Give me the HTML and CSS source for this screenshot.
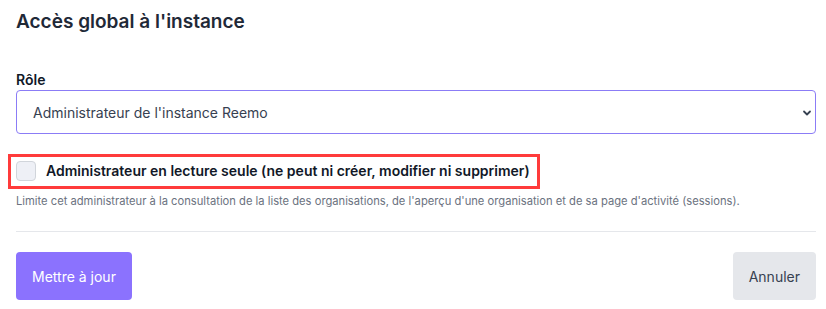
FILE: index.html
```html
<!DOCTYPE html>
<html>
<head>
  <link rel="stylesheet" href="styles.css">
</head>
<body>
  <div class="panel">
    <h1 class="title">Accès global à l'instance</h1>

    <label class="field-label" for="role">Rôle</label>
    <div class="select-wrap">
      <select id="role" class="select">
        <option>Administrateur de l'instance Reemo</option>
      </select>
      <svg class="chevron" width="12" height="12" viewBox="0 0 20 20" aria-hidden="true">
        <path d="M5 7.5l5 5 5-5" fill="none" stroke="#374151" stroke-width="3" stroke-linecap="round" stroke-linejoin="round"/>
      </svg>
    </div>

    <div class="highlight">
      <input type="checkbox" id="readonly" class="checkbox">
      <label for="readonly" class="check-label">Administrateur en lecture seule (ne peut ni créer, modifier ni supprimer)</label>
    </div>
    <p class="help">Limite cet administrateur à la consultation de la liste des organisations, de l'aperçu d'une organisation et de sa page d'activité (sessions).</p>

    <hr class="divider">

    <div class="actions">
      <button type="button" class="btn btn-primary">Mettre à jour</button>
      <button type="button" class="btn btn-secondary">Annuler</button>
    </div>
  </div>
</body>
</html>
```

FILE: styles.css
```css
body {
  margin: 0;
  background: #ffffff;
  font-family: Inter, "Noto Sans", sans-serif;
  color: #1f2937;
}
.panel {
  padding: 8px 10px 0 16px;
}
.title {
  margin: 0 0 34px;
  font-size: 19px;
  line-height: 28px;
  font-weight: 600;
  color: #1f2937;
}
.field-label {
  display: block;
  font-size: 14px;
  line-height: 20px;
  font-weight: 600;
  color: #111827;
}
.select-wrap {
  position: relative;
}
.select {
  display: block;
  width: 100%;
  height: 44px;
  padding: 0 40px 0 16px;
  border: 1px solid #8b7cf6;
  border-radius: 4px;
  background: #fff;
  font-family: inherit;
  font-size: 14px;
  color: #374151;
  appearance: none;
  -webkit-appearance: none;
}
.chevron {
  position: absolute;
  right: 3px;
  top: 17px;
}
.highlight {
  display: inline-flex;
  align-items: center;
  gap: 10px;
  margin: 20px 0 0 -8px;
  padding: 4px 7px 5px 5px;
  border: 3px solid #ff3b3b;
}
.checkbox {
  width: 20px;
  height: 20px;
  margin: 0;
  border: 1px solid #d1d5db;
  border-radius: 4px;
  background: #eef0f6;
  appearance: none;
  -webkit-appearance: none;
}
.check-label {
  font-size: 14px;
  line-height: 20px;
  font-weight: 600;
  color: #111827;
}
.help {
  margin: 4px 0 0;
  font-size: 11.2px;
  line-height: 16px;
  color: #6b7280;
}
.divider {
  margin: 22px 0 0;
  border: 0;
  border-top: 1px solid #e5e7eb;
}
.actions {
  display: flex;
  justify-content: space-between;
  margin-top: 20px;
}
.btn {
  height: 48px;
  padding: 0 16px;
  border: 0;
  border-radius: 4px;
  font-family: inherit;
  font-size: 14px;
}
.btn-primary {
  background: #8b72fe;
  color: #ffffff;
}
.btn-secondary {
  background: #e5e7eb;
  color: #374151;
}
```
